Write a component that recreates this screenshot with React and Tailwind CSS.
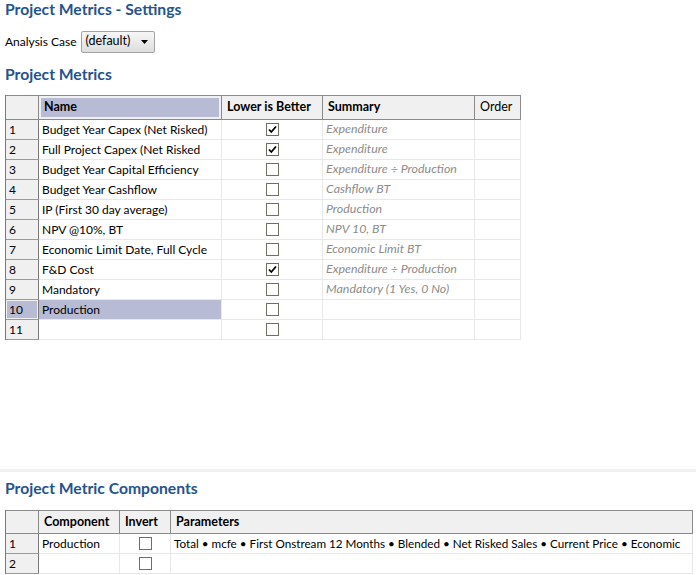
import React from "react";

const FONT = { fontFamily: 'Lato, "Noto Sans", Arial, sans-serif' };

function Check({ checked }) {
  return (
    <div className="w-[13px] h-[13px] border border-[#6f6f5f] bg-white flex items-center justify-center">
      {checked && (
        <svg width="9" height="9" viewBox="0 0 9 9">
          <path d="M1 4.5 L3.3 7 L8 1.5" stroke="#000" strokeWidth="1.8" fill="none" />
        </svg>
      )}
    </div>
  );
}

function HeadCell({ children, selected, last, short }) {
  return (
    <div className={`${short ? "h-[24px]" : "h-[25px]"} border-t border-t-[#8a8a8a] border-r border-r-[#8a8a8a] border-b border-b-[#8a8a8a] bg-[#f0f0f0] ${selected ? "p-[2px]" : ""}`}>
      <div className={`h-full flex items-center whitespace-nowrap text-[12.5px] text-black ${last ? "font-normal" : "font-bold"} ${selected ? "bg-[#b7bbd4] px-[3px]" : "px-[5px]"}`}>
        {children}
      </div>
    </div>
  );
}

function RowHead({ n, selected }) {
  return (
    <div className="h-[20px] border-r border-r-[#7a7a7a] border-b border-b-[#9a9a9a] bg-[#f0f0f0] p-[1px]">
      <div className={`h-full flex items-center px-[2px] text-[12px] ${selected ? "bg-[#b7bbd4]" : ""}`}>{n}</div>
    </div>
  );
}

function Cell({ children, className = "" }) {
  return (
    <div className={`h-[20px] border-r border-r-[#e8e8e8] border-b border-b-[#e8e8e8] flex items-center overflow-hidden whitespace-nowrap ${className}`}>
      {children}
    </div>
  );
}

const metrics = [
  ["Budget Year Capex (Net Risked)", true, "Expenditure"],
  ["Full Project Capex (Net Risked", true, "Expenditure"],
  ["Budget Year Capital Efficiency", false, "Expenditure ÷ Production"],
  ["Budget Year Cashflow", false, "Cashflow BT"],
  ["IP (First 30 day average)", false, "Production"],
  ["NPV @10%, BT", false, "NPV 10, BT"],
  ["Economic Limit Date, Full Cycle", false, "Economic Limit BT"],
  ["F&D Cost", true, "Expenditure ÷ Production"],
  ["Mandatory", false, "Mandatory (1 Yes, 0 No)"],
  ["Production", false, ""],
  ["", false, ""],
];

export default function App() {
  return (
    <div className="w-[696px] h-[575px] bg-white text-black overflow-hidden" style={FONT}>
      <div className="px-[5px]">
        <div className="h-[20px] flex items-center text-[15.7px] font-bold text-[#24538e]">Project Metrics - Settings</div>
        <div className="mt-[10px] h-[23px] flex items-center gap-[4px] text-[12px]">
          <span>Analysis Case</span>
          <div className="w-[74px] h-[22px] border border-[#a3a3a3] rounded-[2px] bg-gradient-to-b from-[#f6f6f6] to-[#dedede] flex items-center justify-between pl-[4px] pr-[6px] text-[12.5px]">
            <span>(default)</span>
            <svg width="7" height="4" viewBox="0 0 7 4"><path d="M0 0 H7 L3.5 4 Z" fill="#000" /></svg>
          </div>
        </div>
        <div className="mt-[12px] h-[20px] flex items-center text-[15.7px] font-bold text-[#24538e]">Project Metrics</div>
        <div className="mt-[10px] w-[515px] grid grid-cols-[33px_183px_101px_152px_46px] border-l border-l-[#7a7a7a]">
          <HeadCell></HeadCell>
          <HeadCell selected>Name</HeadCell>
          <HeadCell>Lower is Better</HeadCell>
          <HeadCell>Summary</HeadCell>
          <HeadCell last>Order</HeadCell>
          {metrics.map(([name, chk, sum], i) => (
            <React.Fragment key={i}>
              <RowHead n={i + 1} selected={i === 9} />
              <Cell className={`px-[3px] text-[12px] ${i === 9 ? "bg-[#b7bbd4]" : ""}`}>{name}</Cell>
              <Cell className="justify-center"><Check checked={chk} /></Cell>
              <Cell className="px-[3px] italic text-[12.4px] text-[#8c8c8c]">{sum}</Cell>
              <Cell></Cell>
            </React.Fragment>
          ))}
        </div>
      </div>
      <div className="mt-[129px] h-[3px] bg-[#f0f0f0]"></div>
      <div className="px-[5px]">
        <div className="mt-[7px] h-[20px] flex items-center text-[15.7px] font-bold text-[#24538e]">Project Metric Components</div>
        <div className="mt-[11px] w-[687px] grid grid-cols-[33px_81px_51px_522px] border-l border-l-[#7a7a7a]">
          <HeadCell short></HeadCell>
          <HeadCell short>Component</HeadCell>
          <HeadCell short>Invert</HeadCell>
          <HeadCell short>Parameters</HeadCell>
          <RowHead n={1} />
          <Cell className="px-[3px] text-[12px]">Production</Cell>
          <Cell className="justify-center"><Check /></Cell>
          <Cell className="px-[3px] text-[11.7px]">Total • mcfe • First Onstream 12 Months • Blended • Net Risked Sales • Current Price • Economic</Cell>
          <RowHead n={2} />
          <Cell></Cell>
          <Cell className="justify-center"><Check /></Cell>
          <Cell></Cell>
        </div>
      </div>
    </div>
  );
}
